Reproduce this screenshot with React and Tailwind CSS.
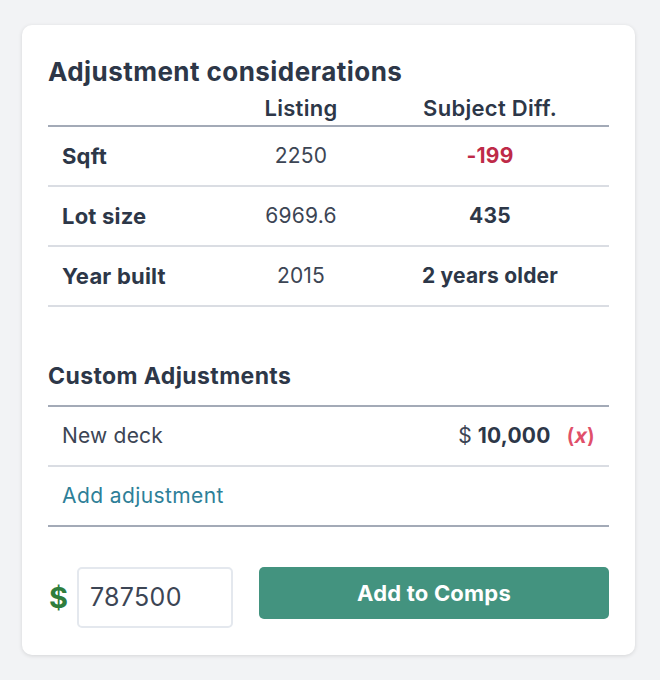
import React from 'react';

const rows = [
  { label: 'Sqft', listing: '2250', diff: '-199', diffClass: 'text-[#be2a48]' },
  { label: 'Lot size', listing: '6969.6', diff: '435', diffClass: 'text-[#2d3748]' },
  { label: 'Year built', listing: '2015', diff: '2 years older', diffClass: 'text-[#2d3748]' },
];

const App = () => {
  return (
    <div
      className="min-h-[680px] bg-[#f2f3f5] pt-[25px] pl-[22px] pr-[25px] pb-[25px] text-[#2d3748]"
      style={{ fontFamily: 'Inter, "Liberation Sans", sans-serif' }}
    >
      <div className="bg-white rounded-[10px] shadow-[0_1px_4px_rgba(0,0,0,0.12)] w-[613px] px-[26px] pt-[32px] pb-[27px]">
        <h2 className="text-[26px] font-bold leading-[30px] tracking-[0.45px]">Adjustment considerations</h2>

        <div className="grid grid-cols-[182px_142px_236px] border-b-2 border-[#a3aab7] text-[22px] font-semibold tracking-[0.3px] h-[40px] pt-[5px] items-center">
          <div />
          <div className="text-center">Listing</div>
          <div className="text-center">Subject Diff.</div>
        </div>

        {rows.map((r) => (
          <div
            key={r.label}
            className="grid grid-cols-[182px_142px_236px] border-b-2 border-[#dadde3] h-[60px] items-center text-[21px] tracking-[0.2px]"
          >
            <div className="pl-[14px] font-bold text-[22px]">{r.label}</div>
            <div className="text-center text-[#3c4554]">{r.listing}</div>
            <div className={`text-center font-bold ${r.diffClass}`}>{r.diff}</div>
          </div>
        ))}

        <h3 className="mt-[55px] text-[23px] font-bold leading-[28px] tracking-[0.4px] pb-[15px] border-b-2 border-[#a3aab7]">Custom Adjustments</h3>

        <div className="flex items-center justify-between h-[60px] border-b-2 border-[#dadde3] pl-[14px] pr-[14px] text-[21px] tracking-[0.2px]">
          <span className="text-[#3c4554]">New deck</span>
          <span className="flex items-center">
            <span className="text-[#3c4554]">$</span>
            <span className="ml-[6px] font-bold">10,000</span>
            <span className="ml-[16px] text-[#e0506a] font-semibold">
              (<i className="not-italic inline-block -skew-x-12 font-bold">x</i>)
            </span>
          </span>
        </div>

        <div className="flex items-center h-[60px] border-b-2 border-[#a3aab7] pl-[14px] text-[21px] tracking-[0.4px]">
          <span className="text-[#2e7f98]">Add adjustment</span>
        </div>

        <div className="flex items-start mt-[40px]">
          <span className="text-[#2f7d3d] font-bold text-[29px] leading-[61px] w-[29px] pl-[1px]">$</span>
          <div className="w-[156px] h-[61px] border-2 border-[#e4e8ee] rounded-[5px] flex items-center pl-[11px] text-[25px] tracking-[0.3px] text-[#3c4554]">
            787500
          </div>
          <button className="ml-[26px] flex-1 h-[52px] bg-[#43937f] rounded-[5px] text-white text-[22px] font-bold tracking-[0.2px]">
            Add to Comps
          </button>
        </div>
      </div>
    </div>
  );
};

export default App;
